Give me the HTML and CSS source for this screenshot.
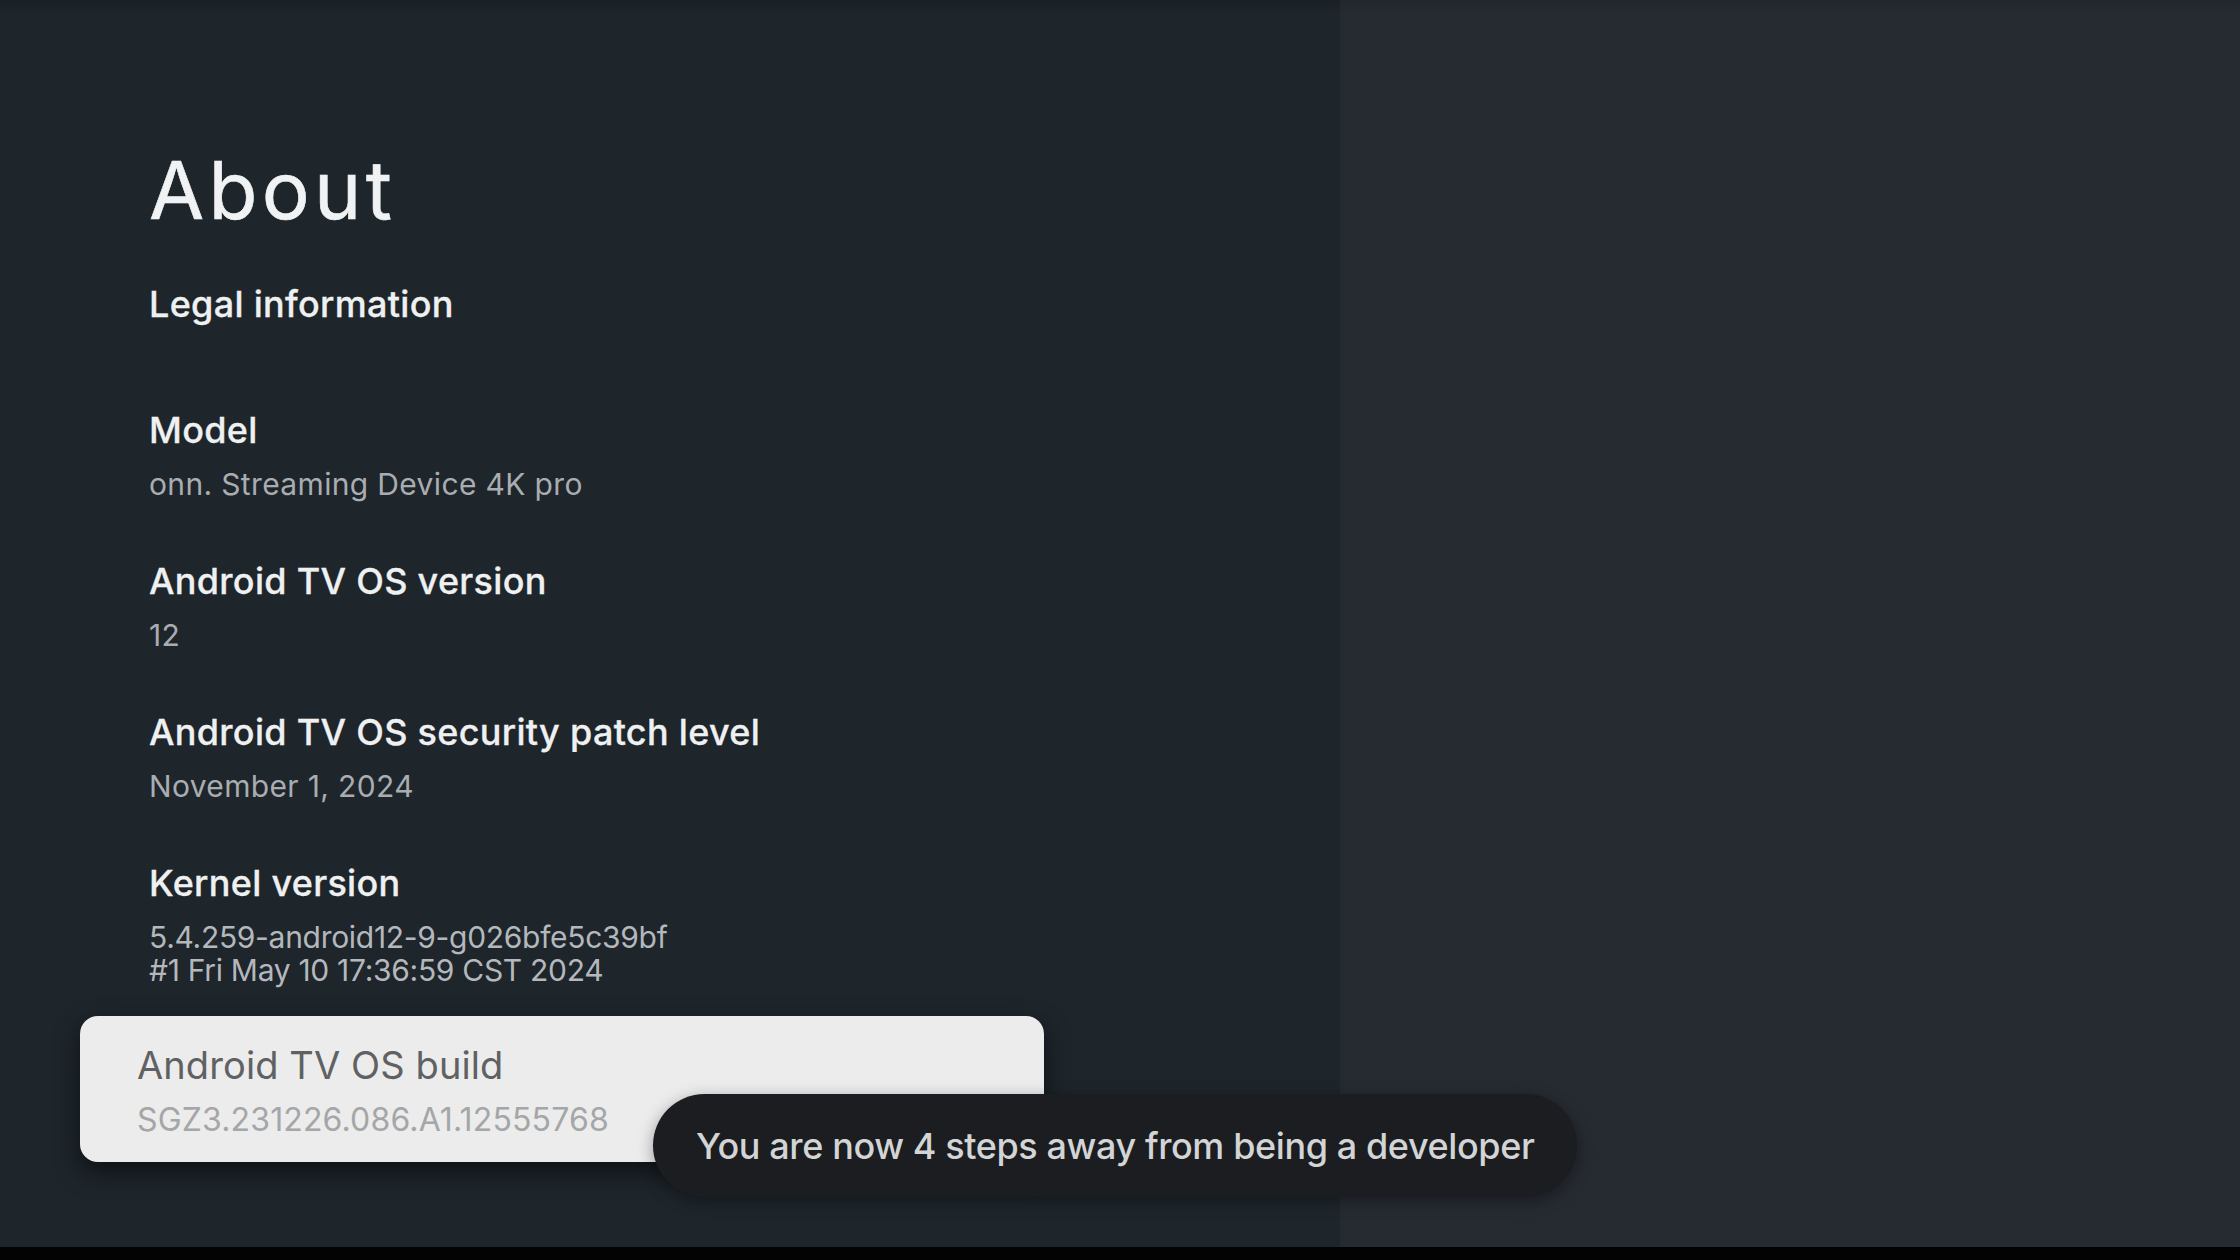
FILE: index.html
```html
<!DOCTYPE html>
<html lang="en">
<head>
<meta charset="utf-8">
<title>About</title>
<link rel="stylesheet" href="styles.css">
</head>
<body>
<div class="screen">
  <div class="main">
    <section class="panel">
      <h1 class="heading">About</h1>
      <div class="item item-legal"><div class="title">Legal information</div></div>
      <div class="list">
        <div class="item">
          <div class="title">Model</div>
          <div class="sub">onn. Streaming Device 4K pro</div>
        </div>
        <div class="item">
          <div class="title">Android TV OS version</div>
          <div class="sub">12</div>
        </div>
        <div class="item">
          <div class="title">Android TV OS security patch level</div>
          <div class="sub">November 1, 2024</div>
        </div>
        <div class="item">
          <div class="title">Kernel version</div>
          <div class="sub sub-tight">5.4.259-android12-9-g026bfe5c39bf<br>#1 Fri May 10 17:36:59 CST 2024</div>
        </div>
      </div>
      <div class="card">
        <div class="title">Android TV OS build</div>
        <div class="sub">SGZ3.231226.086.A1.12555768</div>
      </div>
    </section>
    <aside class="side"></aside>
  </div>
  <div class="bottom-bar"></div>
  <div class="toast">You are now 4 steps away from being a developer</div>
</div>
</body>
</html>
```
FILE: styles.css
```css
html, body {
  margin: 0;
  padding: 0;
  width: 2240px;
  height: 1260px;
  overflow: hidden;
  background: #000;
  font-family: "Inter", "Roboto", sans-serif;
}
.screen {
  position: relative;
  width: 2240px;
  height: 1260px;
  display: flex;
  flex-direction: column;
}
.main {
  flex: 1;
  display: flex;
}
.panel {
  width: 1340px;
  box-sizing: border-box;
  padding: 142px 0 0 149px;
  background: linear-gradient(to bottom, #1a2025 0, #1e252b 14px);
  display: flex;
  flex-direction: column;
  align-items: flex-start;
}
.side {
  flex: 1;
  background: linear-gradient(to bottom, #22262c 0, #262a31 14px);
}
.bottom-bar {
  height: 13px;
  background: #030303;
}
.heading {
  margin: 0;
  font-size: 80px;
  line-height: 96px;
  font-weight: 400;
  color: #f1f2f3;
  letter-spacing: 4.3px;
  -webkit-text-stroke: 0.6px #f1f2f3;
}
.item-legal {
  margin-top: 44px;
}
.list {
  margin-top: 82px;
  display: flex;
  flex-direction: column;
  gap: 58px;
}
.title {
  font-size: 36px;
  line-height: 44px;
  font-weight: 500;
  color: #eef0f1;
  letter-spacing: 0.3px;
  -webkit-text-stroke: 0.3px #eef0f1;
}
.sub {
  margin-top: 16px;
  font-size: 30px;
  line-height: 33px;
  font-weight: 400;
  color: #a9adb1;
  letter-spacing: 0.35px;
}
.sub-tight {
  letter-spacing: -0.3px;
  color: #b4b8bc;
}
.card {
  margin: 29px 0 0 -69px;
  width: 964px;
  box-sizing: border-box;
  padding: 27px 0 26px 57px;
  background: #ececec;
  border-radius: 18px;
  box-shadow: 0 10px 24px rgba(0,0,0,0.55);
}
.card .title {
  font-size: 38px;
  color: #5f6163;
  font-weight: 400;
  letter-spacing: 0.1px;
  -webkit-text-stroke: 0;
}
.card .sub {
  font-size: 32px;
  color: #a4a6a8;
  letter-spacing: 0.15px;
}
.toast {
  position: absolute;
  left: 653px;
  top: 1094px;
  width: 924px;
  height: 103px;
  box-sizing: border-box;
  padding-left: 43px;
  display: flex;
  align-items: center;
  border-radius: 52px;
  background: #1b1d20;
  box-shadow: 0 4px 16px rgba(0,0,0,0.35);
  color: #d2d4d6;
  font-size: 36px;
  line-height: 44px;
  font-weight: 500;
  letter-spacing: -0.4px;
}
```
